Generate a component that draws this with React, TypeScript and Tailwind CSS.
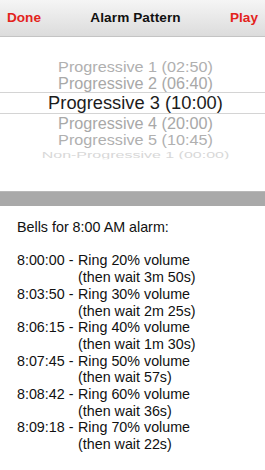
import React from 'react';

interface Bell {
  time: string;
  volume: number;
  wait: string;
}

const bells: Bell[] = [
  { time: '8:00:00', volume: 20, wait: '3m 50s' },
  { time: '8:03:50', volume: 30, wait: '2m 25s' },
  { time: '8:06:15', volume: 40, wait: '1m 30s' },
  { time: '8:07:45', volume: 50, wait: '57s' },
  { time: '8:08:42', volume: 60, wait: '36s' },
  { time: '8:09:18', volume: 70, wait: '22s' },
];

export default function App() {
  return (
    <div
      className="w-[265px] h-[470px] overflow-hidden bg-white flex flex-col"
      style={{ fontFamily: '"Liberation Sans", Arial, sans-serif' }}
    >
      {/* Nav bar */}
      <div className="h-[37px] shrink-0 flex items-center justify-between px-[7px] bg-gradient-to-b from-[#f5f5f5] to-[#dcdcdc] border-b border-[#c4c4c4]">
        <span className="text-[13.6px] font-bold text-[#e3231c]">Done</span>
        <span className="text-[13.6px] font-bold text-[#111] tracking-[0.1px]">Alarm Pattern</span>
        <span className="text-[13.6px] font-bold text-[#e3231c]">Play</span>
      </div>

      {/* Picker */}
      <div className="h-[154px] shrink-0 flex flex-col pt-[20px] pl-[6px] text-center">
        <div className="h-[18px] flex items-center justify-center text-[16.2px] text-[#b0b0b0] scale-y-[0.92]">
          Progressive 1 (02:50)
        </div>
        <div className="h-[17px] flex items-center justify-center text-[16.2px] text-[#a8a8a8]">
          Progressive 2 (06:40)
        </div>
        <div className="h-[22px] -ml-[6px] pl-[6px] flex items-center justify-center border-y border-[#d4d4d4] text-[18.3px] text-[#1c1c1c]">
          Progressive 3 (10:00)
        </div>
        <div className="h-[18px] flex items-center justify-center text-[16.2px] text-[#a8a8a8]">
          Progressive 4 (20:00)
        </div>
        <div className="h-[16px] flex items-center justify-center text-[16.2px] text-[#b0b0b0] scale-y-[0.9]">
          Progressive 5 (10:45)
        </div>
        <div className="h-[14px] flex items-center justify-center text-[16px] text-[#d8d8d8] scale-y-[0.6] overflow-hidden">
          Non-Progressive 1 (00:00)
        </div>
      </div>

      {/* Divider bar */}
      <div className="h-[15px] shrink-0 bg-[#a9a9a9] border-t border-[#b8b8b8]" />

      {/* Bell list */}
      <div className="pt-[13px] pl-[17px] text-[14.3px] leading-[16.7px] text-[#111]">
        <div>Bells for 8:00 AM alarm:</div>
        <div className="h-[16.7px]" />
        {bells.map((b) => (
          <div key={b.time} className="grid grid-cols-[61px_1fr]">
            <span className="whitespace-pre">{b.time} - </span>
            <span>Ring {b.volume}% volume</span>
            <span />
            <span>(then wait {b.wait})</span>
          </div>
        ))}
      </div>
    </div>
  );
}
